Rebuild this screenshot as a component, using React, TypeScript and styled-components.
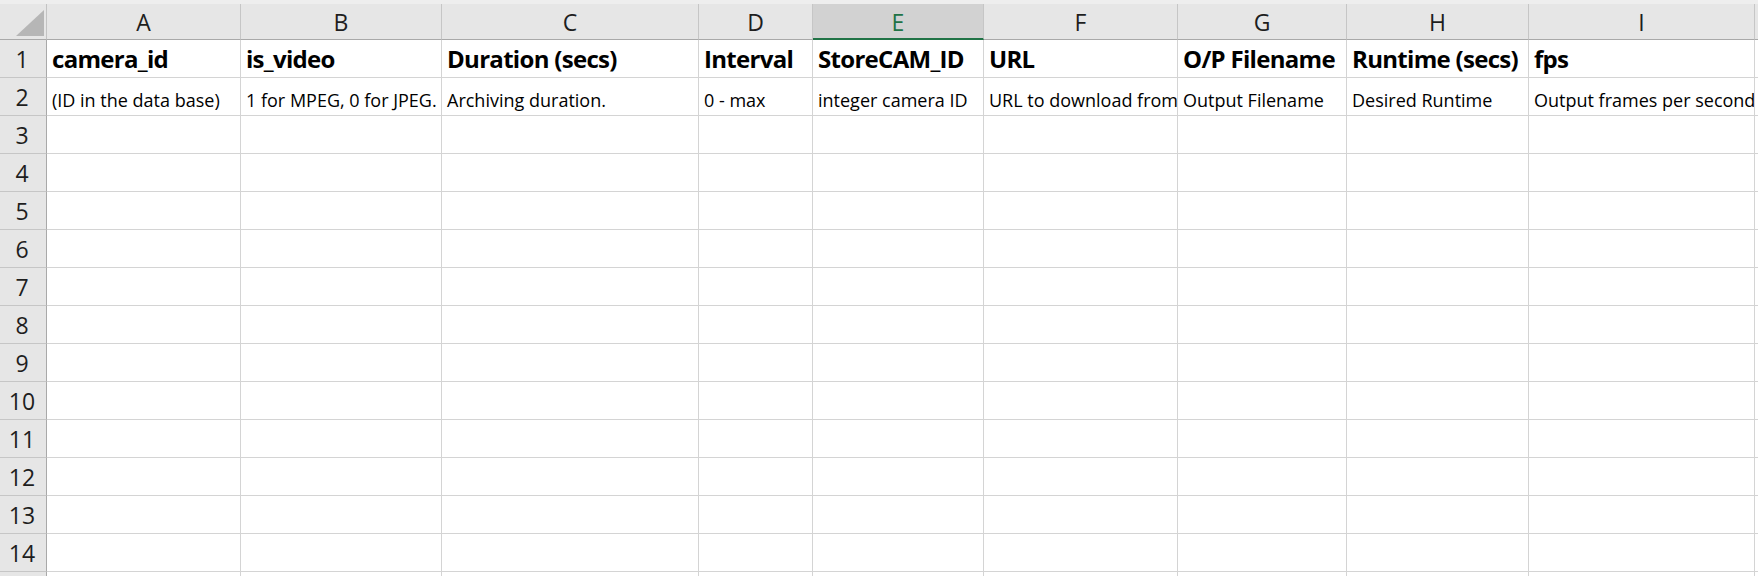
import styled, { createGlobalStyle } from "styled-components";

const GlobalStyle = createGlobalStyle`
  html, body {
    margin: 0;
    padding: 0;
    background: #ffffff;
    overflow: hidden;
  }
`;

const COLS = [
  { key: "A", width: 194 },
  { key: "B", width: 201 },
  { key: "C", width: 257 },
  { key: "D", width: 114 },
  { key: "E", width: 171 },
  { key: "F", width: 194 },
  { key: "G", width: 169 },
  { key: "H", width: 182 },
  { key: "I", width: 226 },
];

const SELECTED = "E";

const titles = [
  "camera_id",
  "is_video",
  "Duration (secs)",
  "Interval",
  "StoreCAM_ID",
  "URL",
  "O/P Filename",
  "Runtime (secs)",
  "fps",
];

const notes = [
  "(ID in the data base)",
  "1 for MPEG, 0 for JPEG.",
  "Archiving duration.",
  "0 - max",
  "integer camera ID",
  "URL to download from",
  "Output Filename",
  "Desired Runtime",
  "Output frames per second",
];

const ROW_COUNT = 15;

const App = () => {
  const rows: string[][] = [];
  rows.push(titles);
  rows.push(notes);
  for (let i = 2; i < ROW_COUNT; i++) rows.push(COLS.map(() => ""));

  return (
    <>
      <GlobalStyle />
      <Window>
        <TopStrip />
        <Sheet>
          <Corner>
            <svg width="47" height="36" viewBox="0 0 47 36">
              <polygon points="16,32 44,32 44,6" fill="#b6b6b6" />
            </svg>
          </Corner>
          {COLS.map((c) => (
            <ColHead key={c.key} $selected={c.key === SELECTED}>
              {c.key}
            </ColHead>
          ))}
          <ColHead $selected={false} />

          {rows.map((row, r) => (
            <Row key={r}>
              <RowHead>{r + 1}</RowHead>
              {row.map((text, c) => (
                <Cell key={c} $bold={r === 0}>
                  {text}
                </Cell>
              ))}
              <Cell $bold={false} />
            </Row>
          ))}
        </Sheet>
      </Window>
    </>
  );
};

export default App;

const Window = styled.div`
  width: 1758px;
  height: 576px;
  overflow: hidden;
  background: #ffffff;
  font-family: "Open Sans", "Liberation Sans", sans-serif;
`;

const TopStrip = styled.div`
  height: 4px;
  background: #eeeeee;
`;

const Sheet = styled.div`
  display: grid;
  grid-template-columns: 47px ${COLS.map((c) => `${c.width}px`).join(" ")} 1fr;
  grid-auto-rows: 38px;
  grid-template-rows: 36px;
`;

const Row = styled.div`
  display: contents;
`;

const Corner = styled.div`
  background: #e6e6e6;
  border-right: 1px solid #c3c3c3;
  border-bottom: 1px solid #a9a9a9;
  box-sizing: border-box;
  svg {
    display: block;
  }
`;

const ColHead = styled.div<{ $selected: boolean }>`
  box-sizing: border-box;
  display: flex;
  align-items: center;
  justify-content: center;
  background: ${(p) => (p.$selected ? "#d2d2d2" : "#e6e6e6")};
  color: ${(p) => (p.$selected ? "#217346" : "#1e1e1e")};
  border-right: 1px solid #c6c6c6;
  border-bottom: ${(p) => (p.$selected ? "2px solid #217346" : "1px solid #a9a9a9")};
  font-size: 23px;
  padding-top: 1px;
`;

const RowHead = styled.div`
  box-sizing: border-box;
  display: flex;
  align-items: center;
  justify-content: center;
  background: #e6e6e6;
  color: #1e1e1e;
  border-right: 1px solid #a9a9a9;
  border-bottom: 1px solid #c6c6c6;
  font-size: 23px;
  padding-right: 2px;
`;

const Cell = styled.div<{ $bold: boolean }>`
  box-sizing: border-box;
  display: flex;
  align-items: flex-end;
  padding: 0 2px ${(p) => (p.$bold ? "3px" : "0")} 5px;
  border-right: 1px solid #d4d4d4;
  border-bottom: 1px solid #d4d4d4;
  color: #000000;
  white-space: nowrap;
  overflow: hidden;
  font-size: ${(p) => (p.$bold ? "24px" : "18px")};
  line-height: 30px;
  font-weight: ${(p) => (p.$bold ? 700 : 400)};
  letter-spacing: ${(p) => (p.$bold ? "-0.7px" : "0")};
`;
